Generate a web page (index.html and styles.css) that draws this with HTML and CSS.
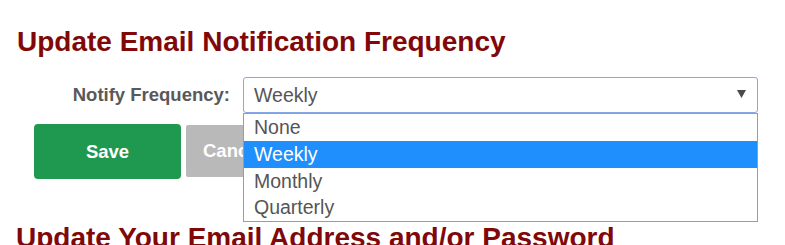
FILE: index.html
```html
<!DOCTYPE html>
<html>
<head>
<meta charset="utf-8">
<link rel="stylesheet" href="styles.css">
</head>
<body>
<div class="page">
  <h2 class="title">Update Email Notification Frequency</h2>
  <div class="field-row">
    <label class="field-label">Notify Frequency:</label>
    <div class="select-wrap">
      <div class="select">
        <span class="select-value">Weekly</span>
        <svg class="select-arrow" width="9" height="8" viewBox="0 0 9 8"><path d="M0 0 L9 0 L4.5 8 Z" fill="#4a4a4a"/></svg>
      </div>
      <ul class="dropdown">
        <li class="option">None</li>
        <li class="option selected">Weekly</li>
        <li class="option">Monthly</li>
        <li class="option">Quarterly</li>
      </ul>
    </div>
  </div>
  <div class="buttons">
    <button class="btn btn-save">Save</button>
    <button class="btn btn-cancel">Cancel</button>
  </div>
  <h2 class="title title-second">Update Your Email Address and/or Password</h2>
</div>
</body>
</html>
```
FILE: styles.css
```css
html, body {
  margin: 0;
  padding: 0;
  background: #ffffff;
}
body {
  font-family: "Liberation Sans", Arial, sans-serif;
  overflow: hidden;
}
.page {
  padding: 26px 0 0 17px;
}
.title {
  margin: 0;
  font-size: 28px;
  line-height: 32px;
  font-weight: bold;
  color: #800808;
  white-space: nowrap;
}
.field-row {
  display: flex;
  align-items: center;
  margin-top: 19px;
}
.field-label {
  width: 213px;
  text-align: right;
  font-size: 18.5px;
  font-weight: bold;
  color: #595959;
  margin-right: 13px;
}
.select-wrap {
  position: relative;
  width: 515px;
}
.select {
  box-sizing: border-box;
  height: 36px;
  border: 1px solid #86a8e6;
  border-radius: 3px;
  display: flex;
  align-items: center;
  justify-content: space-between;
  padding: 0 11px 0 10px;
  background: #fff;
}
.select-value {
  font-size: 19.5px;
  color: #555;
}
.select-arrow {
  display: block;
  margin-top: -2px;
}
.dropdown {
  position: absolute;
  top: 36px;
  left: 0;
  width: 515px;
  box-sizing: border-box;
  margin: 0;
  padding: 0;
  list-style: none;
  border: 1px solid #7e9fd9;
  background: #fff;
  z-index: 2;
}
.option {
  height: 26.75px;
  line-height: 26.75px;
  padding-left: 10px;
  font-size: 19.5px;
  color: #555;
}
.option.selected {
  background: #1e8ffc;
  color: #fff;
}
.buttons {
  display: flex;
  align-items: flex-start;
  gap: 5px;
  margin-top: 11px;
  padding-left: 17px;
}
.btn {
  border: none;
  font-family: "Liberation Sans", Arial, sans-serif;
  font-weight: bold;
  font-size: 18.5px;
  color: #fff;
  width: 147px;
  padding: 0;
}
.btn-save {
  height: 55px;
  background: #1f9850;
  border-radius: 4px;
}
.btn-cancel {
  height: 52px;
  margin-top: 1px;
  background: #b9b9b9;
  border-radius: 2px;
  text-align: left;
  padding-left: 17px;
}
.title-second {
  margin-top: 43px;
  margin-left: -1px;
}
```
